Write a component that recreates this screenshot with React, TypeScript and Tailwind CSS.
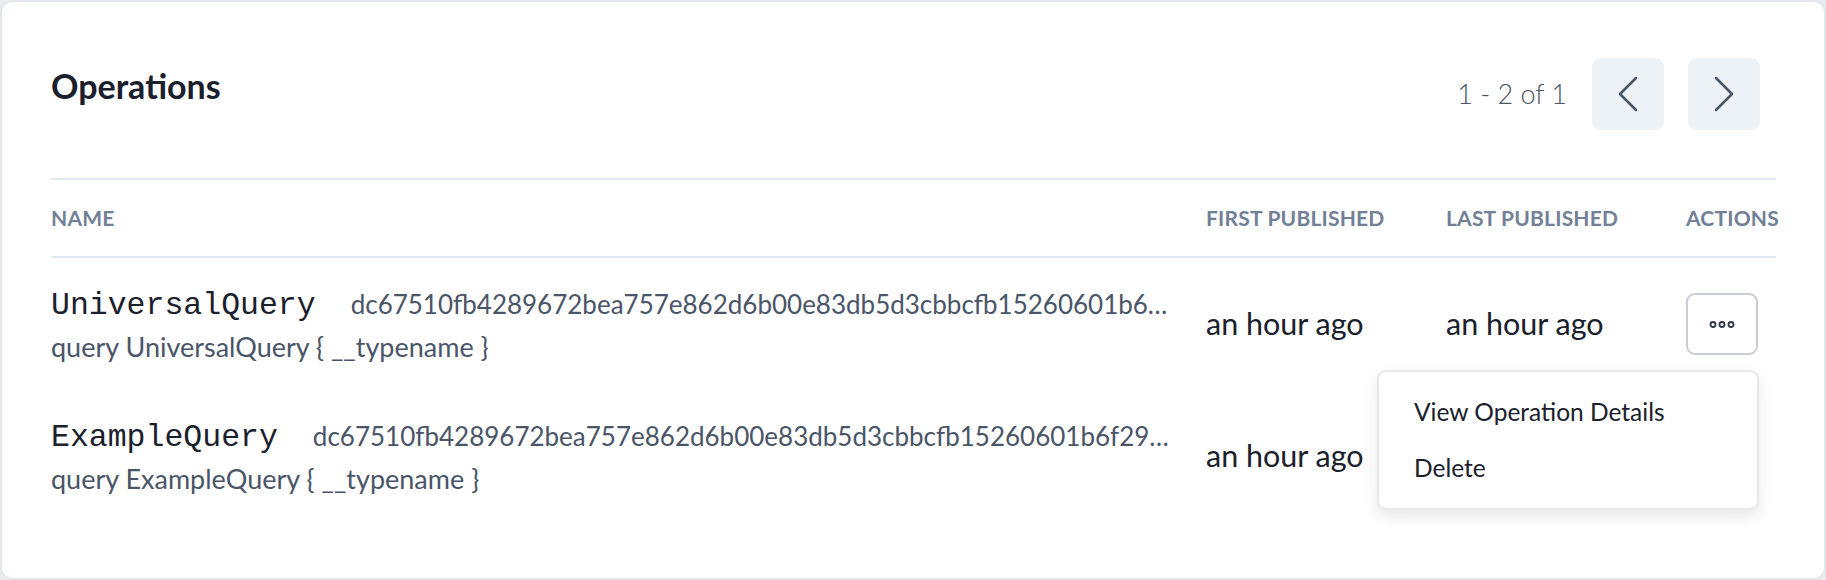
import React from "react";
import { ChevronLeft, ChevronRight } from "lucide-react";

const rows = [
  {
    name: "UniversalQuery",
    hash: "dc67510fb4289672bea757e862d6b00e83db5d3cbbcfb15260601b6f29a8e7c1d4",
    body: "query UniversalQuery { __typename }",
    first: "an hour ago",
    last: "an hour ago",
    menu: true,
  },
  {
    name: "ExampleQuery",
    hash: "dc67510fb4289672bea757e862d6b00e83db5d3cbbcfb15260601b6f29a8e7c1d4",
    body: "query ExampleQuery { __typename }",
    first: "an hour ago",
    last: "an hour ago",
    menu: false,
  },
];

function Dots() {
  return (
    <svg width="26" height="9" viewBox="0 0 26 9" fill="none" stroke="#2d3748" strokeWidth="1.8">
      <circle cx="4" cy="4.5" r="2.5" />
      <circle cx="13" cy="4.5" r="2.5" />
      <circle cx="22" cy="4.5" r="2.5" />
    </svg>
  );
}

export default function App() {
  return (
    <div
      className="w-[1826px] h-[580px] bg-[#e9ebee]"
      style={{ fontFamily: "Lato, 'Noto Sans', sans-serif" }}
    >
      <div className="relative h-full rounded-[12px] border-2 border-[#e3e6ea] bg-white pt-[56px] pl-[49px] pr-[48px]">
        <div className="flex items-start justify-between pr-[16px]">
          <h2 className="text-[34px] leading-[56px] font-bold text-[#1a202c]">Operations</h2>
          <div className="flex items-center h-[72px]">
            <span className="text-[27px] font-light text-[#4a5568] mr-[25px]">1 - 2 of 1</span>
            <button className="w-[72px] h-[72px] rounded-[9px] bg-[#edf2f7] flex items-center justify-center">
              <ChevronLeft size={64} strokeWidth={0.95} color="#4a5568" />
            </button>
            <button className="ml-[24px] w-[72px] h-[72px] rounded-[9px] bg-[#edf2f7] flex items-center justify-center">
              <ChevronRight size={64} strokeWidth={0.95} color="#4a5568" />
            </button>
          </div>
        </div>

        <div className="mt-[48px] border-t-2 border-[#e2e8f0]">
          <div className="grid grid-cols-[1fr_240px_240px_90px] h-[78px] items-center border-b-2 border-[#e2e8f0] text-[21px] font-bold tracking-[0.2px] text-[#718096]">
            <div>NAME</div>
            <div>FIRST PUBLISHED</div>
            <div>LAST PUBLISHED</div>
            <div>ACTIONS</div>
          </div>

          {rows.map((r) => (
            <div
              key={r.name}
              className="grid grid-cols-[1fr_240px_240px_90px] items-center py-[23px]"
            >
              <div className="min-w-0 pr-[34px]">
                <div className="flex items-baseline h-[46px] leading-[46px] min-w-0">
                  <span
                    className="shrink-0 text-[31.5px] text-[#1a202c]"
                    style={{ fontFamily: "'Liberation Mono', 'DejaVu Sans Mono', monospace" }}
                  >
                    {r.name}
                  </span>
                  <span className="ml-[35px] min-w-0 truncate text-[26px] text-[#4a5568]">
                    {r.hash}
                  </span>
                </div>
                <div className="h-[40px] leading-[40px] text-[27px] text-[#4a5568]">{r.body}</div>
              </div>
              <div className="text-[30.5px] text-[#1a202c]">{r.first}</div>
              <div className="text-[30.5px] text-[#1a202c]">{r.last}</div>
              <div>
                {r.menu && (
                  <div className="relative w-[72px]">
                    <button className="w-[72px] h-[62px] rounded-[9px] border-2 border-[#c9cdd3] bg-white flex items-center justify-center">
                      <Dots />
                    </button>
                    <div className="absolute right-[-1px] top-[77px] z-10 w-[382px] rounded-[9px] border-2 border-[#e6e8ec] bg-white py-[12px] shadow-[0_6px_16px_rgba(0,0,0,0.10)]">
                      <div className="h-[56px] flex items-center px-[35px] text-[24.5px] text-[#1a202c]">
                        View Operation Details
                      </div>
                      <div className="h-[56px] flex items-center px-[35px] text-[24.5px] text-[#1a202c]">
                        Delete
                      </div>
                    </div>
                  </div>
                )}
              </div>
            </div>
          ))}
        </div>
      </div>
    </div>
  );
}
